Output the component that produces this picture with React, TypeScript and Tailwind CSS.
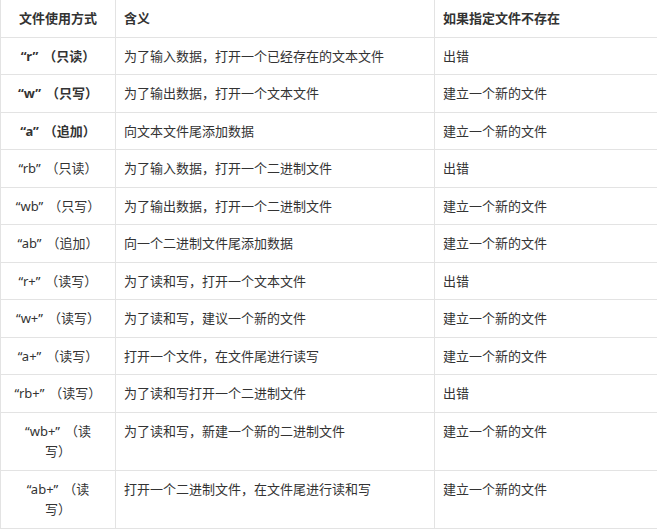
const rows = [
  { q: "“r”", p: "（只读）", bold: true, desc: "为了输入数据，打开一个已经存在的文本文件", missing: "出错" },
  { q: "“w”", p: "（只写）", bold: true, desc: "为了输出数据，打开一个文本文件", missing: "建立一个新的文件" },
  { q: "“a”", p: "（追加）", bold: true, desc: "向文本文件尾添加数据", missing: "建立一个新的文件" },
  { q: "“rb”", p: "（只读）", desc: "为了输入数据，打开一个二进制文件", missing: "出错" },
  { q: "“wb”", p: "（只写）", desc: "为了输出数据，打开一个二进制文件", missing: "建立一个新的文件" },
  { q: "“ab”", p: "（追加）", desc: "向一个二进制文件尾添加数据", missing: "建立一个新的文件" },
  { q: "“r+”", p: "（读写）", desc: "为了读和写，打开一个文本文件", missing: "出错" },
  { q: "“w+”", p: "（读写）", desc: "为了读和写，建议一个新的文件", missing: "建立一个新的文件" },
  { q: "“a+”", p: "（读写）", desc: "打开一个文件，在文件尾进行读写", missing: "建立一个新的文件" },
  { q: "“rb+”", p: "（读写）", desc: "为了读和写打开一个二进制文件", missing: "出错" },
  { q: "“wb+”", p: "（读", p2: "写）", desc: "为了读和写，新建一个新的二进制文件", missing: "建立一个新的文件" },
  { q: "“ab+”", p: "（读", p2: "写）", desc: "打开一个二进制文件，在文件尾进行读和写", missing: "建立一个新的文件" },
];

const cell = "border-l border-b border-[#e3e3e3] py-2 align-top";

const App = () => {
  return (
    <div className="w-[657px] h-[531px] overflow-hidden bg-white font-['Noto_Sans_CJK_SC',sans-serif] text-[13px] leading-[20.5px] text-[#333] [text-spacing-trim:space-all]">
      <table className="border-collapse table-fixed w-[680px]">
        <colgroup>
          <col className="w-[115px]" />
          <col className="w-[319px]" />
          <col className="w-[246px]" />
        </colgroup>
        <thead>
          <tr>
            <th className={`${cell} px-2 font-bold text-center`}>文件使用方式</th>
            <th className={`${cell} px-2 font-bold text-left`}>含义</th>
            <th className={`${cell} px-2 font-bold text-left`}>如果指定文件不存在</th>
          </tr>
        </thead>
        <tbody>
          {rows.map((r, i) => (
            <tr key={i}>
              <td className={`${cell} px-3 text-center ${r.bold ? "font-bold" : ""}`}>
                <span className="font-['Noto_Sans',sans-serif]">{r.q}</span>
                <span className="ml-[5px]">{r.p}</span>
                {r.p2 && (
                  <>
                    <br />
                    {r.p2}
                  </>
                )}
              </td>
              <td className={`${cell} px-2`}>{r.desc}</td>
              <td className={`${cell} px-2`}>{r.missing}</td>
            </tr>
          ))}
        </tbody>
      </table>
    </div>
  );
};

export default App;
